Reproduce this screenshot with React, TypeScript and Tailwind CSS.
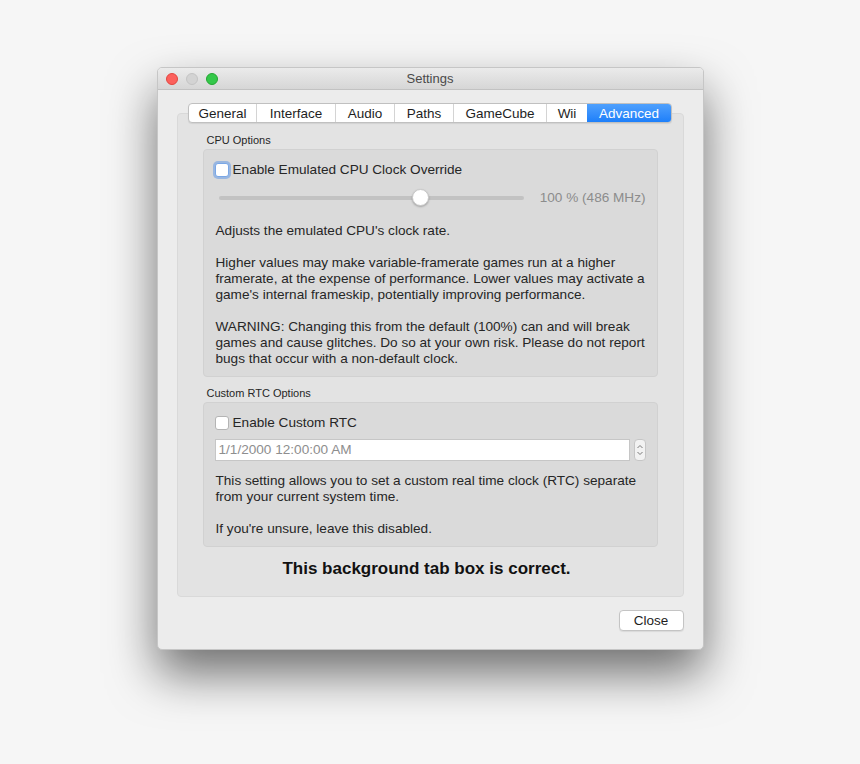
/**
 * Settings window – Advanced tab.
 */

const tabs = [
  { name: 'General', w: 'w-[67px]' },
  { name: 'Interface', w: 'w-[79px]' },
  { name: 'Audio', w: 'w-[59px]' },
  { name: 'Paths', w: 'w-[59px]' },
  { name: 'GameCube', w: 'w-[93px]' },
  { name: 'Wii', w: 'w-[41px]' },
  { name: 'Advanced', w: 'w-[84px]' },
]

const Checkbox = ({ focused }: { focused?: boolean }) => (
  <div
    className={`h-[14px] w-[14px] shrink-0 rounded-[3px] bg-white ${
      focused
        ? 'border border-[#7aa7e6] shadow-[0_0_0_2px_rgba(102,155,230,0.55)]'
        : 'border border-[#b4b4b4]'
    }`}
  />
)

const GroupLabel = ({ children, className = '' }: { children: string; className?: string }) => (
  <div className={`h-[14px] pl-[4px] text-[11px] leading-[14px] text-[#262626] ${className}`}>
    {children}
  </div>
)

export default function App() {
  return (
    <div
      className="min-h-[764px] bg-[#f6f6f6] pt-[67px]"
      style={{ fontFamily: '"Liberation Sans", Arial, sans-serif' }}
    >
      <div className="mx-auto flex h-[583px] w-[547px] flex-col overflow-hidden rounded-[5px] border border-[#c6c6c6] bg-[#ececec] shadow-[0_24px_48px_rgba(0,0,0,0.55)]">
        {/* Title bar */}
        <div className="relative flex h-[22px] shrink-0 items-center justify-center border-b border-[#c2c2c2] bg-gradient-to-b from-[#ebebeb] to-[#d6d6d6]">
          <div className="absolute left-[8px] top-[5px] flex gap-[8px]">
            <div className="h-[12px] w-[12px] rounded-full border border-[#e2463f] bg-[#fc605c]" />
            <div className="h-[12px] w-[12px] rounded-full border border-[#c4c4c4] bg-[#d3d3d3]" />
            <div className="h-[12px] w-[12px] rounded-full border border-[#24a732] bg-[#34c84a]" />
          </div>
          <span className="text-[13px] text-[#4a4a4a]">Settings</span>
        </div>

        {/* Body */}
        <div className="flex flex-1 flex-col px-[19px] pt-[13px]">
          {/* Tab bar */}
          <div className="relative z-10 flex justify-center">
            <div className="flex h-[20px] overflow-hidden rounded-[4px] border border-[#c0c0c0] bg-white shadow-[0_1px_1px_rgba(0,0,0,0.08)]">
              {tabs.map((t, i) => (
                <div
                  key={t.name}
                  className={`flex items-center justify-center pt-[1px] text-[13.5px] leading-none ${t.w} ${
                    t.name === 'Advanced'
                      ? 'bg-gradient-to-b from-[#4ea0fd] to-[#1c7ffa] text-white'
                      : 'text-[#1e1e1e]'
                  } ${i > 0 && t.name !== 'Advanced' ? 'border-l border-[#d4d4d4]' : ''}`}
                >
                  {t.name}
                </div>
              ))}
            </div>
          </div>

          {/* Tab box */}
          <div className="-mt-[10px] flex flex-col rounded-[4px] border border-[#d9d9d9] bg-[#e3e3e3] px-[25px] pb-[17px] pt-[19px]">
            <GroupLabel className="mb-[2px]">CPU Options</GroupLabel>
            <div className="flex flex-col rounded-[4px] border border-[#d1d1d1] bg-[#dadada] pb-[9px] pl-[11px] pr-[11px] pt-[12px] text-[13.6px] text-[#262626]">
              <div className="flex h-[16px] items-center gap-[4px]">
                <Checkbox focused />
                <span>Enable Emulated CPU Clock Override</span>
              </div>
              <div className="mt-[10px] flex h-[20px] items-center">
                <div className="relative ml-[4px] h-[4px] w-[305px] rounded-full bg-[#c2c2c2]">
                  <div className="absolute left-[193px] top-[-7px] h-[17px] w-[17px] rounded-full border border-[#c8c8c8] bg-white shadow-[0_1px_2px_rgba(0,0,0,0.25)]" />
                </div>
                <span className="ml-auto text-[#8c8c8c]">100 % (486 MHz)</span>
              </div>
              <div className="mt-[15px] whitespace-nowrap pl-[1px] leading-[16px]">
                <p>Adjusts the emulated CPU's clock rate.</p>
                <p className="mt-[16px]">
                  Higher values may make variable-framerate games run at a higher
                  <br />
                  framerate, at the expense of performance. Lower values may activate a
                  <br />
                  game's internal frameskip, potentially improving performance.
                </p>
                <p className="mt-[16px]">
                  WARNING: Changing this from the default (100%) can and will break
                  <br />
                  games and cause glitches. Do so at your own risk. Please do not report
                  <br />
                  bugs that occur with a non-default clock.
                </p>
              </div>
            </div>

            <GroupLabel className="mb-[2px] mt-[9px]">Custom RTC Options</GroupLabel>
            <div className="flex flex-col rounded-[4px] border border-[#d1d1d1] bg-[#dadada] px-[11px] pb-[9px] pt-[12px] text-[13.6px] text-[#262626]">
              <div className="flex h-[16px] items-center gap-[4px]">
                <Checkbox />
                <span>Enable Custom RTC</span>
              </div>
              <div className="mt-[8px] flex h-[22px] items-center gap-[4px]">
                <div className="flex h-[22px] flex-1 items-center border border-[#c6c6c6] bg-white pl-[3px] text-[#8e8e8e]">
                  1/1/2000 12:00:00 AM
                </div>
                <div className="flex h-[22px] w-[12px] flex-col items-center justify-center rounded-[4px] border border-[#c6c6c6] bg-[#f2f2f2]">
                  <svg width="8" height="14" viewBox="0 0 8 14" fill="none" stroke="#7a7a7a" strokeWidth="1">
                    <path d="M1.5 5L4 2.5L6.5 5" />
                    <path d="M1.5 9L4 11.5L6.5 9" />
                  </svg>
                </div>
              </div>
              <div className="mt-[12px] whitespace-nowrap pl-[1px] leading-[16px]">
                <p>
                  This setting allows you to set a custom real time clock (RTC) separate
                  <br />
                  from your current system time.
                </p>
                <p className="mt-[16px]">If you're unsure, leave this disabled.</p>
              </div>
            </div>

            <div className="mt-[12px] pr-[7px] text-center text-[17px] font-bold leading-[20px] text-[#111]">
              This background tab box is correct.
            </div>
          </div>

          {/* Footer */}
          <div className="mt-[13px] flex justify-end">
            <button className="h-[21px] w-[65px] rounded-[4px] border border-[#c4c4c4] bg-white text-[13.5px] text-[#1e1e1e] shadow-[0_1px_1px_rgba(0,0,0,0.08)]">
              Close
            </button>
          </div>
        </div>
      </div>
    </div>
  )
}
